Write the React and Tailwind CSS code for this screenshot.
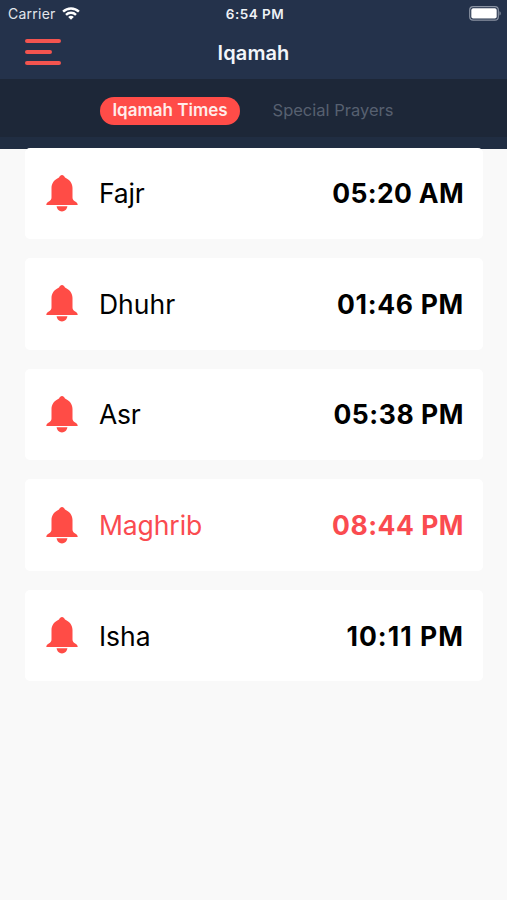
import React, { useState } from 'react';

const prayers = [
  { name: 'Fajr', time: '05:20 AM', nameClass: 'tracking-[-0.2px]', timeClass: 'tracking-[0.35px]' },
  { name: 'Dhuhr', time: '01:46 PM', nameClass: 'tracking-[0px]', timeClass: 'tracking-[0.7px]' },
  { name: 'Asr', time: '05:38 PM', nameClass: 'tracking-[-0.2px]', timeClass: 'tracking-[0.55px]' },
  { name: 'Maghrib', time: '08:44 PM', nameClass: 'tracking-[-0.1px]', timeClass: 'tracking-[0.5px]', next: true },
  { name: 'Isha', time: '10:11 PM', nameClass: 'tracking-[0px]', timeClass: 'tracking-[1.05px]' },
];

const WifiIcon = () => (
  <svg className="w-[18px] h-[13px] -mt-px" viewBox="0 0 18 13" fill="none" stroke="#fff" strokeWidth="2.4">
    <path d="M1.1 4.7a11.2 11.2 0 0 1 15.8 0" />
    <path d="M4 7.8a7.1 7.1 0 0 1 10 0" />
    <path d="M9 12.7 6.2 9.9a3.9 3.9 0 0 1 5.6 0Z" fill="#fff" stroke="none" />
  </svg>
);

const BatteryIcon = () => (
  <svg className="w-[33px] h-[15px] -mt-px" viewBox="0 0 33 15">
    <rect x="0.7" y="0.7" width="28.6" height="13.4" rx="3.4" fill="none" stroke="#8a93a3" strokeWidth="1.2" />
    <rect x="2.3" y="2.3" width="25.4" height="10.2" rx="1.8" fill="#fff" />
    <path d="M30.5 5.2c1.6.5 1.6 3.9 0 4.4Z" fill="#8a93a3" />
  </svg>
);

const BellIcon = () => (
  <svg className="w-8 h-[37px] shrink-0" viewBox="0 0 32 37" fill="#ff4c46">
    <path d="M16 0c1.3 0 2.3.9 3 2.4 4.8 2.3 7.5 5.8 7.5 10.6v9.5c0 2 .9 3 2.7 3.9 1.7.8 2.5 1.9 2.500 3.600H.3c0-1.700.8-2.800 2.500-3.600 1.800-.9 2.700-1.900 2.700-3.900V13C5.500 8.200 8.200 4.700 13 2.400 13.700.9 14.700 0 16 0Z" />
    <path d="M10.6 31.3h10.8c-.4 3.100-2.600 5.200-5.400 5.200s-5-2.100-5.400-5.200Z" />
  </svg>
);

const Header = () => (
  <header className="h-[79px] bg-[#24324b] text-white">
    {/* Status bar */}
    <div className="h-7 grid grid-cols-[1fr_auto_1fr] items-center pl-2 pr-[5px]">
      <div className="flex items-center gap-[6px]">
        <span className="text-[14px] leading-[26px] text-[#e2e6ec] tracking-[0.25px]">Carrier</span>
        <WifiIcon />
      </div>
      <span className="text-[13.5px] leading-7 font-semibold text-[#eef1f5] tracking-[0.5px]">6:54 PM</span>
      <div className="flex justify-end">
        <BatteryIcon />
      </div>
    </div>
    {/* Title bar */}
    <div className="h-[50px] grid grid-cols-[1fr_auto_1fr] items-center pl-[25px] pr-[25px]">
      <button className="flex flex-col gap-[7.4px] -mt-[2px]" aria-label="Menu">
        <span className="w-9 h-1 rounded-full bg-[#f3544f]" />
        <span className="w-[26.5px] h-1 rounded-full bg-[#f3544f]" />
        <span className="w-9 h-1 rounded-full bg-[#f3544f]" />
      </button>
      <h1 className="text-[20px] leading-[50px] font-semibold text-[#f2f5fa] tracking-[0.1px]">Iqamah</h1>
    </div>
  </header>
);

const Tabs = ({ active, onChange }) => {
  const base = 'h-[28px] rounded-full pb-[2px] leading-[24px] whitespace-nowrap';
  const on = 'bg-[#ff4c48] text-[#ffecea] font-semibold';
  const off = 'text-[#576070]';

  return (
    <nav className="h-[70px] bg-[#1d2738] border-b-[12px] border-[#202d42] flex pt-[18px] pl-[100px]">
      <button
        className={`${base} w-[140px] text-[17px] ${active === 'times' ? on : off}`}
        onClick={() => onChange('times')}
      >
        Iqamah Times
      </button>
      <button
        className={`${base} w-[140px] ml-[23px] text-[16.5px] ${active === 'special' ? on : off}`}
        onClick={() => onChange('special')}
      >
        Special Prayers
      </button>
    </nav>
  );
};

const PrayerCard = ({ prayer }) => (
  <li
    className={`h-[91.5px] flex items-center rounded-[5px] bg-white pl-[21px] pr-[19px] ${
      prayer.next ? 'text-[#fa4b50]' : 'text-black'
    }`}
  >
    <BellIcon />
    <span className={`ml-[21px] text-[26.5px] leading-8 ${prayer.nameClass}`}>{prayer.name}</span>
    <span className={`ml-auto text-[26.5px] leading-8 font-bold ${prayer.timeClass}`}>{prayer.time}</span>
  </li>
);

const App = () => {
  const [tab, setTab] = useState('times');

  return (
    <div className="w-full h-[900px] overflow-hidden bg-[#f9f9f9] font-[Inter,sans-serif]">
      <Header />
      <Tabs active={tab} onChange={setTab} />
      {/* The list slides slightly under the tab bar edge */}
      <ul className="relative -mt-[1.5px] ml-[25px] mr-[24px] flex flex-col gap-[19.1px]">
        {prayers.map((prayer) => (
          <PrayerCard key={prayer.name} prayer={prayer} />
        ))}
      </ul>
    </div>
  );
};

export default App;
